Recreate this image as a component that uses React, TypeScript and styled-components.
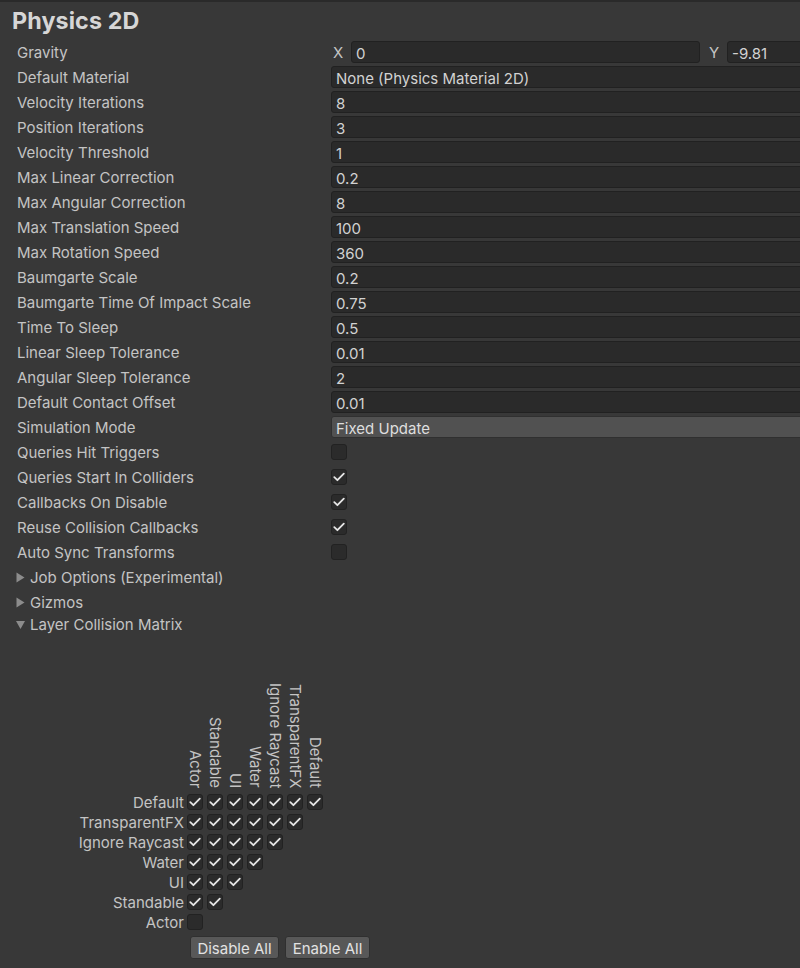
import React from "react";
import styled, { createGlobalStyle } from "styled-components";

const Global = createGlobalStyle`
  html, body { margin: 0; padding: 0; background: #383838; overflow: hidden; }
  body { font-family: Inter, "Noto Sans", "Liberation Sans", sans-serif; }
  * { box-sizing: border-box; }
`;

const Page = styled.div`
  width: 800px;
  height: 968px;
  background: #383838;
  border-top: 2px solid #2a2a2a;
  overflow: hidden;
  position: relative;
`;

const Title = styled.div`
  height: 39px;
  padding: 3px 0 0 12px;
  font-size: 23.3px;
  font-weight: 700;
  color: #d6d6d6;
  line-height: 32px;
  letter-spacing: 0.1px;
`;

const Rows = styled.div`
  display: flex;
  flex-direction: column;
  gap: 3px;
`;

const Row = styled.div`
  display: flex;
  align-items: center;
  height: 22px;
  width: 820px;
`;

const Label = styled.div`
  width: 331px;
  padding-left: 17px;
  font-size: 15px;
  line-height: 22px;
  padding-top: 1px;
  color: #c4c4c4;
  white-space: nowrap;
  flex: none;
`;

const Field = styled.div<{ $w?: number }>`
  height: 22px;
  ${(p) => (p.$w ? `width: ${p.$w}px; flex: none;` : "flex: 1;")}
  background: #2a2a2a;
  border: 1px solid #212121;
  border-radius: 3px;
  padding-left: 4px;
  font-size: 15px;
  line-height: 21px;
  padding-top: 1px;
  color: #d2d2d2;
  white-space: nowrap;
  overflow: hidden;
`;

const Dropdown = styled(Field)`
  background: #515151;
  border-color: #303030;
  color: #dedede;
`;

const AxisLabel = styled.div`
  width: 20px;
  flex: none;
  padding-left: 2px;
  padding-top: 1px;
  font-size: 15px;
  color: #c4c4c4;
`;

const Box = styled.div`
  width: 16px;
  height: 16px;
  flex: none;
  background: #2b2b2b;
  border: 1px solid #222222;
  border-radius: 3px;
  display: flex;
  align-items: center;
  justify-content: center;
`;

const Foldout = styled.div<{ $h?: number }>`
  display: flex;
  align-items: center;
  height: ${(p) => p.$h ?? 22}px;
  padding-left: 16px;
  font-size: 15px;
  color: #c4c4c4;
  gap: 5px;
`;

const Arrow = styled.svg`
  width: 9px;
  height: 11px;
  flex: none;
`;

const Matrix = styled.div`
  display: flex;
  flex-direction: column;
`;

const Header = styled.div`
  display: flex;
  height: 157px;
  padding-left: 185px;
  align-items: flex-end;
`;

const ColLabel = styled.div`
  width: 20px;
  height: 100%;
  display: flex;
  align-items: flex-end;
  justify-content: center;
  padding-bottom: 4px;
`;

const VText = styled.span`
  writing-mode: vertical-rl;
  font-size: 15px;
  line-height: 17px;
  color: #c4c4c4;
  white-space: nowrap;
`;

const MRow = styled.div`
  display: flex;
  align-items: center;
  height: 20px;
`;

const MLabel = styled.div`
  width: 187px;
  padding-right: 3px;
  padding-top: 1px;
  text-align: right;
  font-size: 15px;
  color: #c4c4c4;
  white-space: nowrap;
  flex: none;
`;

const MBoxes = styled.div`
  display: flex;
  gap: 4px;
`;

const Buttons = styled.div`
  display: flex;
  gap: 6px;
  padding-left: 190px;
  margin-top: 4px;
`;

const Button = styled.div<{ $w: number }>`
  width: ${(p) => p.$w}px;
  height: 23px;
  background: #585858;
  border: 1px solid #303030;
  border-radius: 3px;
  font-size: 15px;
  line-height: 21px;
  padding-top: 1px;
  color: #e2e2e2;
  text-align: center;
`;

const Check = () => (
  <svg width="12" height="10" viewBox="0 0 12 10">
    <path d="M1.3 5.2 L4.4 8.2 L10.8 1.6" fill="none" stroke="#e6e6e6" strokeWidth="1.8" strokeLinecap="round" strokeLinejoin="round" />
  </svg>
);

const CheckBox = ({ on }: { on: boolean }) => <Box>{on && <Check />}</Box>;

const Tri = ({ open }: { open?: boolean }) => (
  <Arrow viewBox="0 0 9 11">
    {open ? <path d="M0 2 L9 2 L4.5 10 Z" fill="#8c8c8c" /> : <path d="M0.5 0.5 L8.5 5.5 L0.5 10.5 Z" fill="#8c8c8c" />}
  </Arrow>
);

const values: [string, string][] = [
  ["Velocity Iterations", "8"],
  ["Position Iterations", "3"],
  ["Velocity Threshold", "1"],
  ["Max Linear Correction", "0.2"],
  ["Max Angular Correction", "8"],
  ["Max Translation Speed", "100"],
  ["Max Rotation Speed", "360"],
  ["Baumgarte Scale", "0.2"],
  ["Baumgarte Time Of Impact Scale", "0.75"],
  ["Time To Sleep", "0.5"],
  ["Linear Sleep Tolerance", "0.01"],
  ["Angular Sleep Tolerance", "2"],
  ["Default Contact Offset", "0.01"],
];

const checks: [string, boolean][] = [
  ["Queries Hit Triggers", false],
  ["Queries Start In Colliders", true],
  ["Callbacks On Disable", true],
  ["Reuse Collision Callbacks", true],
  ["Auto Sync Transforms", false],
];

const layers = ["Default", "TransparentFX", "Ignore Raycast", "Water", "UI", "Standable", "Actor"];
const cols = [...layers].reverse();

export default function App() {
  return (
    <Page>
      <Global />
      <Title>Physics 2D</Title>
      <Rows>
        <Row>
          <Label>Gravity</Label>
          <AxisLabel>X</AxisLabel>
          <Field $w={349}>0</Field>
          <div style={{ width: 7 }} />
          <AxisLabel>Y</AxisLabel>
          <Field>-9.81</Field>
        </Row>
        <Row>
          <Label>Default Material</Label>
          <Field>None (Physics Material 2D)</Field>
        </Row>
        {values.map(([l, v]) => (
          <Row key={l}>
            <Label>{l}</Label>
            <Field>{v}</Field>
          </Row>
        ))}
        <Row>
          <Label>Simulation Mode</Label>
          <Dropdown>Fixed Update</Dropdown>
        </Row>
        {checks.map(([l, on]) => (
          <Row key={l}>
            <Label>{l}</Label>
            <CheckBox on={on} />
          </Row>
        ))}
        <Foldout>
          <Tri />
          Job Options (Experimental)
        </Foldout>
        <Foldout>
          <Tri />
          Gizmos
        </Foldout>
      </Rows>
      <Foldout $h={22}>
        <Tri open />
        Layer Collision Matrix
      </Foldout>
      <Matrix>
        <Header>
          {cols.map((c) => (
            <ColLabel key={c}>
              <VText>{c}</VText>
            </ColLabel>
          ))}
        </Header>
        {layers.map((l, i) => {
          const n = layers.length - i;
          return (
            <MRow key={l}>
              <MLabel>{l}</MLabel>
              <MBoxes>
                {Array.from({ length: n }).map((_, j) => (
                  <CheckBox key={j} on={l !== "Actor"} />
                ))}
              </MBoxes>
            </MRow>
          );
        })}
        <Buttons>
          <Button $w={89}>Disable All</Button>
          <Button $w={85}>Enable All</Button>
        </Buttons>
      </Matrix>
    </Page>
  );
}
